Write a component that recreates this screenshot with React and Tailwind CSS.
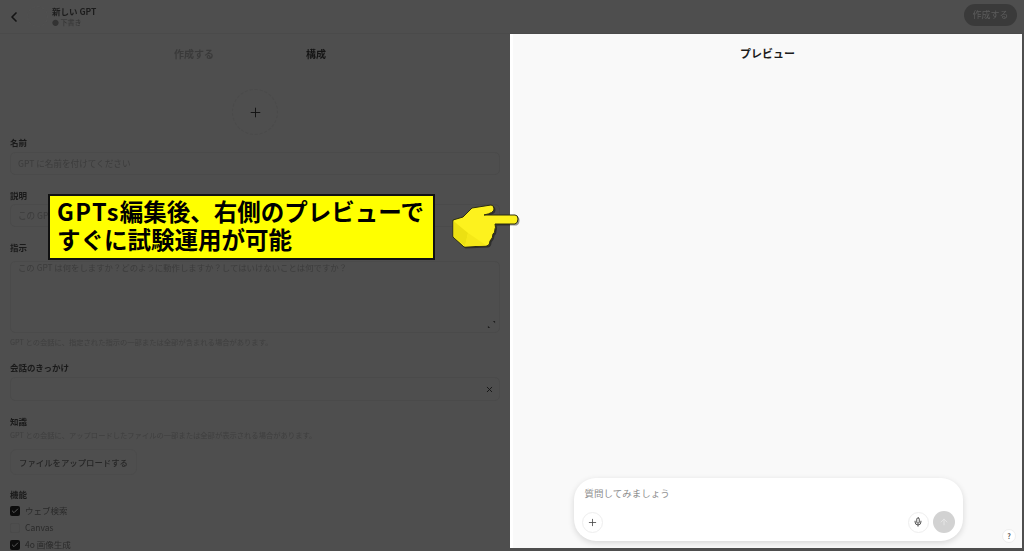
import React from 'react'
import { ChevronLeft, Plus, X, Mic, ArrowUp, Check } from 'lucide-react'

const font = { fontFamily: '"Noto Sans CJK JP", "Noto Sans", sans-serif' }

function Label({ children, className = '' }) {
  return <div className={`text-[8.5px] leading-[12px] font-bold text-[#1a1a1a] ${className}`}>{children}</div>
}

function Help({ children, className = '' }) {
  return <div className={`text-[7.3px] leading-[12px] text-[#3f3f3f] ${className}`}>{children}</div>
}

function CheckRow({ checked, label }) {
  return (
    <div className="h-[17px] flex items-center gap-[5px]">
      {checked ? (
        <span className="w-[10px] h-[10px] rounded-[2px] bg-[#0c0c0c] flex items-center justify-center">
          <Check size={8} strokeWidth={3} className="text-[#5a5a5a]" />
        </span>
      ) : (
        <span className="w-[10px] h-[10px] rounded-[2px] border border-[#4a4a4a]" />
      )}
      <span className="text-[8.5px] text-[#2a2a2a]">{label}</span>
    </div>
  )
}

const handPath =
  'M32 13 L51 10 Q54 10 54 14 Q54 18 44 20 L75 20 Q78 20 78 24 Q78 28 75 29 L55 29 Q56 33 55 34 Q55 38 53 39 Q53 43 50 46 Q50 50 47 51 L24 52 L13 42 L13 25 L23 22 Z'

function Hand() {
  return (
    <svg viewBox="0 0 90 60" className="absolute left-[440px] top-[195px] w-[90px] h-[60px]">
      <path d={handPath} fill="#000" opacity="0.4" transform="translate(1.5 1.5)" />
      <path d={handPath} fill="#fdf21e" stroke="#2c2c10" strokeWidth="1" strokeLinejoin="round" />
      <path d="M13.5 26 L28 38 L25 51.5 L13.5 41.5 Z" fill="#ece012" />
      <path d="M28 38 L46.5 50.5 L25 51.5 Z" fill="#f5e818" />
    </svg>
  )
}

export default function App() {
  return (
    <div className="relative w-[1024px] h-[551px] overflow-hidden bg-[#4e4e4e] flex flex-col" style={font}>
      <header className="h-[34px] shrink-0 flex items-center border-b border-[#4a4a4a] pl-[6px] pr-[7px]">
        <ChevronLeft size={16} strokeWidth={2.5} className="text-[#141414]" />
        <div className="w-[21px] h-[21px] ml-[5px] rounded-full border border-dashed border-[#515151]" />
        <div className="ml-[4px] -mt-[1px] blur-[0.4px]">
          <div className="text-[8.5px] leading-[11px] font-bold text-[#1c1c1c]">新しい GPT</div>
          <div className="text-[7px] leading-[10px] text-[#333]">● 下書き</div>
        </div>
        <div className="ml-auto w-[53px] h-[22px] -mt-[4px] rounded-full bg-[#3a3a3a] flex items-center justify-center text-[9px] text-[#5c5c5c] blur-[0.5px]">
          作成する
        </div>
      </header>

      <div className="flex-1 min-h-0 flex">
        <main className="w-[510px] shrink-0 px-[10px] overflow-hidden blur-[0.5px]">
          <div className="h-[39px] flex items-center justify-center">
            <div className="w-[122px] text-center text-[10px] font-bold text-[#3a3a3a]">作成する</div>
            <div className="w-[122px] text-center text-[10px] font-bold text-[#141414]">構成</div>
          </div>

          <div className="mt-[16px] flex justify-center">
            <div className="w-[46px] h-[46px] rounded-full border border-dashed border-[#4a4a4a] flex items-center justify-center">
              <Plus size={15} strokeWidth={1.5} className="text-[#111]" />
            </div>
          </div>

          <Label className="mt-[1px]">名前</Label>
          <div className="mt-[4px] h-[23px] rounded-[5px] border border-[#4a4a4a] px-[7px] flex items-center text-[8.6px] text-[#3c3c3c]">
            GPT に名前を付けてください
          </div>

          <Label className="mt-[14px]">説明</Label>
          <div className="mt-[3px] h-[23px] rounded-[5px] border border-[#4a4a4a] px-[7px] flex items-center text-[8.6px] text-[#3c3c3c]">
            この GP
          </div>

          <Label className="mt-[14px]">指示</Label>
          <div className="relative mt-[8px] h-[72px] rounded-[5px] border border-[#4a4a4a] px-[7px] text-[8.4px] leading-[10px] text-[#3c3c3c]">
            この GPT は何をしますか？どのように動作しますか？してはいけないことは何ですか？
            <svg viewBox="0 0 10 10" className="absolute right-[3px] bottom-[3px] w-[9px] h-[9px] text-[#1e1e1e]">
              <path d="M1 9 L3.5 9 L1 6.5 Z M9 1 L6.5 1 L9 3.5 Z" fill="currentColor" />
            </svg>
          </div>
          <Help className="mt-[3px]">GPT との会話に、指定された指示の一部または全部が含まれる場合があります。</Help>

          <Label className="mt-[13px]">会話のきっかけ</Label>
          <div className="mt-[4px] h-[24px] rounded-[5px] border border-[#4a4a4a] flex items-center justify-end pr-[5px]">
            <X size={9} strokeWidth={2.5} className="text-[#141414]" />
          </div>

          <Label className="mt-[14px]">知識</Label>
          <Help className="mt-[2px]">GPT との会話に、アップロードしたファイルの一部または全部が表示される場合があります。</Help>
          <div className="mt-[8px] w-[127px] h-[26px] rounded-[6px] border border-[#4b4b4b] flex items-center justify-center text-[8.4px] font-medium text-[#262626]">
            ファイルをアップロードする
          </div>

          <Label className="mt-[13px]">機能</Label>
          <div className="mt-[2px]">
            <CheckRow checked label="ウェブ検索" />
            <CheckRow label="Canvas" />
            <CheckRow checked label="4o 画像生成" />
          </div>
        </main>

        <aside className="flex-1 mr-[2px] mb-[3px] bg-[#f9f9f9] border-l-[3px] border-white relative flex flex-col items-center">
          <div className="h-[39px] shrink-0 flex items-center text-[11px] font-bold text-[#1c1c1c]">プレビュー</div>
          <div className="mt-auto mb-[7px] ml-[1px] w-[389px] h-[63px] rounded-[22px] bg-white shadow-[0_2px_6px_rgba(0,0,0,0.14)] flex flex-col px-[8px] py-[8px]">
            <div className="pl-[3px] text-[9.5px] leading-[14px] text-[#8e8e8e]">質問してみましょう</div>
            <div className="mt-auto flex items-center">
              <div className="w-[21px] h-[21px] rounded-full border border-[#eeeeee] flex items-center justify-center">
                <Plus size={11} strokeWidth={1.75} className="text-[#444]" />
              </div>
              <div className="ml-auto w-[21px] h-[21px] rounded-full border border-[#eeeeee] flex items-center justify-center">
                <Mic size={10} strokeWidth={2.25} className="text-[#444]" />
              </div>
              <div className="ml-[4px] w-[22px] h-[22px] rounded-full bg-[#d2d2d2] flex items-center justify-center">
                <ArrowUp size={10} strokeWidth={2} className="text-[#e8e8e8]" />
              </div>
            </div>
          </div>
          <div className="absolute right-[6px] bottom-[5px] w-[14px] h-[14px] rounded-full border border-[#eeeeee] bg-white flex items-center justify-center text-[7px] font-bold text-[#555]">
            ?
          </div>
        </aside>
      </div>

      <div className="absolute left-[48px] top-[194px] w-[387px] h-[66px] bg-[#ffff00] border-2 border-[#111] pl-[7px] pt-[1px] text-[23.5px] leading-[28px] font-bold text-black whitespace-nowrap">
        <span className="tracking-[1.5px]">GPTs</span>編集後、右側のプレビューで
        <br />
        すぐに試験運用が可能
      </div>
      <Hand />
    </div>
  )
}
